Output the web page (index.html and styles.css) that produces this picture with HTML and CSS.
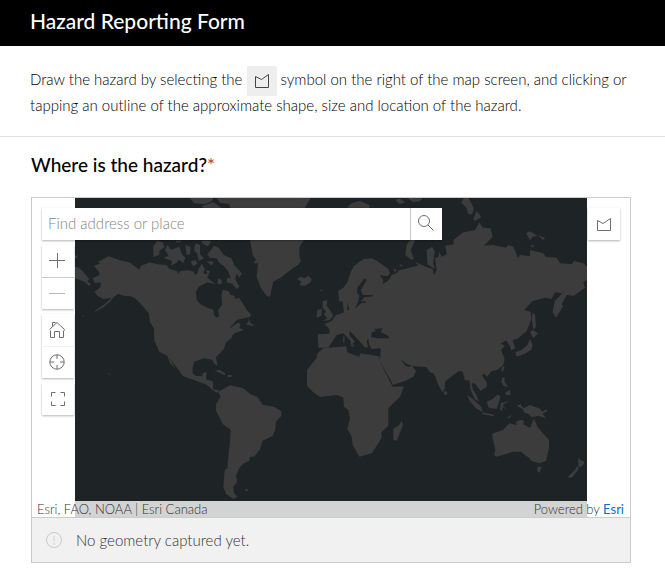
FILE: index.html
```html
<!DOCTYPE html>
<html lang="en">
<head>
<meta charset="utf-8">
<meta name="viewport" content="width=device-width, initial-scale=1">
<title>Hazard Reporting Form</title>
<link rel="stylesheet" href="styles.css">
</head>
<body>
<header class="banner"><h1>Hazard Reporting Form</h1></header>
<main>
<section class="intro">
<p>Draw the hazard by selecting the <span class="symbol"><svg width="16" height="16" viewBox="0 0 16 16"><path d="M1.500 3.500L7.500 6.500L14.500 1.500V14.500H1.500Z"/></svg></span> symbol on the right of the map screen, and clicking or tapping an outline of the approximate shape, size and location of the hazard.</p>
</section>
<section class="question">
<h2>Where is the hazard?<span class="required">*</span></h2>
<div class="card">
<div class="map">
<svg class="world" viewBox="15 9 1536 957" role="img" aria-label="World map">
<rect class="sea" x="15" y="9" width="1536" height="957"/>
<g class="land">
<path d="M72 212L90 206L84 200L116 184L150 196L178 202L208 224L213 212L240 202L262 208L290 210L298 222L322 228L324 238L330 228L355 226L372 230L374 240L382 236L385 222L396 206L404 222L400 235L412 238L408 225L420 228L412 248L436 268L412 262L386 275L378 290L380 315L392 328L412 338L430 344L432 360L440 368L448 364L444 345L456 330L454 300L458 284L475 288L482 300L494 302L496 312L506 308L518 324L530 344L543 358L540 366L520 370L500 375L476 402L505 382L512 390L508 398L522 405L496 414L488 420L484 430L468 442L462 462L438 486L442 512L434 508L426 494L400 490L386 496L372 500L368 520L368 535L378 543L396 543L400 533L410 531L408 553L428 559L430 583L450 587L440 593L425 583L410 569L372 555L338 543L328 527L295 485L318 523L300 505L292 483L268 470L253 437L252 400L240 382L236 355L222 338L210 325L198 312L182 304L160 302L145 296L132 305L118 322L100 337L70 354L82 342L108 325L124 308L100 312L82 302L74 290L92 276L92 262L74 264L68 250L88 240L88 232Z"/>
<path d="M15 180L25 186L15 190ZM15 214L32 222L48 240L58 252L52 258L62 268L58 274L44 260L15 250ZM36 362L42 360L42 365ZM110 532L122 539L121 542Z"/>
<path d="M262 138L278 142L284 156L268 168L268 180L250 186L250 155ZM285 166L292 150L304 164L328 155L336 178L346 188L340 204L326 194L318 205L302 212L306 198L280 188L296 182ZM318 137H332V142H318ZM346 150L362 156L360 178L350 180ZM376 145L390 150L390 178L402 190L386 198L382 178L372 165ZM392 137L425 137L414 154L400 148ZM362 200L376 194L382 206L370 214ZM422 166L432 152L446 158L462 180L484 190L494 212L516 235L508 248L500 236L496 252L508 275L500 282L486 266L470 262L472 248L482 250L474 228L462 214L448 204L440 190L420 188L412 178ZM410 198L432 200L424 212ZM444 250L456 256L454 268L442 266ZM536 380L534 370L545 388L552 390L548 394L528 388Z"/>
<path d="M360 9H430L424 20L404 28L372 25ZM395 34L430 22L455 39H400ZM440 9H722L705 39H480L478 28L450 23ZM540 135H702L688 156L688 176L692 200L684 210L668 220L632 248L610 260L600 305L590 303L572 278L560 245L564 205L550 205L558 195L548 180Z"/>
<path d="M681 252L692 245L704 250L715 242L725 252L722 262L704 273L688 270L694 260ZM752 284H757V288H752ZM434 527L448 524L466 535L464 541ZM472 539L484 540L490 544L474 547ZM525 881L536 884L528 890Z"/>
<path d="M450 587L480 571L520 580L540 597L562 605L578 629L612 635L634 649V663L618 680L616 703L608 723L578 737L570 763L552 785H540L538 797L518 807L506 823L498 843L502 860L490 875L492 895L503 905L490 912L468 897L460 875L464 825L472 820L480 735L482 705L458 687L438 647V627L452 605L445 593Z"/>
</g>
<g class="land" transform="translate(690 0)">
<path d="M72 388L95 378L108 360L124 355L132 352L128 320L118 318L114 288L130 278L142 262L152 232L160 215L178 200L192 192L215 190L232 198L265 222L270 236L262 244L240 240L250 256L248 266L264 258L275 240L292 234L296 226L315 222L335 216L356 212L345 200L366 210L378 215L398 222L402 240L410 225L405 190L415 186L418 170L425 185L440 178L436 152L462 148L460 135L490 112L525 105L538 82L548 98L572 100L578 125L552 152L580 150L618 158L625 150L640 155L654 188L660 180L690 184V165L730 175L738 186L770 188L780 205L815 208L822 198L850 205L861 215V255L850 262L855 278L822 302L800 300L785 328L790 332L768 368L758 352L764 318L780 302L794 285L785 295L765 292L755 312L735 308L698 318L672 345L692 350L694 372L680 408L655 430L638 436L646 460L634 466L628 450L618 436L602 446L615 452L603 465L614 490L610 510L592 525L575 528L560 546L554 536L545 540L560 562V575L542 588L526 566L515 565L518 582L528 598L538 620L524 612L512 586L508 556L495 556L488 530L478 528L460 540L435 560L434 582L428 592L415 570L405 542L400 535L390 532L378 516L342 514L322 508L302 492L316 512L328 516L334 510L348 528L340 545L315 558L278 570L272 556L240 500L242 460L215 462L208 450L204 430L200 440L205 456L195 458L180 440L150 408L148 420L165 440L152 450V438L130 415L110 420L100 435L85 458H55L53 418L88 416V402L76 390Z"/>
<path d="M70 460L138 454L142 472L178 486L180 475L238 484L242 505L278 575L312 574L300 605L265 640V692L244 712L245 728L232 750L215 775L178 785L158 750L155 725L142 702L150 670L145 645L132 635L130 608L112 600L60 606L38 590L21 572V525L50 488L52 475ZM304 677L309 690L290 737L280 736V701L298 690Z"/>
<path d="M68 318L82 315L80 332L90 345L100 362L88 376L68 378L82 370L72 358L78 350L68 338ZM52 344L66 342L64 362L50 368ZM130 423L134 425L133 445L129 442ZM150 450L164 448L158 456ZM62 284H66V288H62Z"/>
<path d="M0 9H28L15 34L0 38ZM142 38L155 24L180 18L208 30V39ZM286 14L300 11L316 22L298 27ZM322 9H368L360 19L340 22ZM483 22L492 9H505L522 40L516 58L504 56L500 40ZM520 72L530 48L544 66L524 78ZM330 135H346L332 165L342 192L334 194L315 180L320 150ZM380 165L396 155L404 168L400 205L404 222L382 208ZM280 220L290 225L284 234ZM298 207L308 210L304 216ZM678 115L690 109L712 122L698 126L690 135ZM714 120L736 130L728 135ZM692 150L704 152L698 158Z"/>
<path d="M697 352L705 360L708 395L700 404L696 378ZM690 412L698 404L714 415L700 430ZM690 432L698 450L694 464L674 476L650 485L646 472L665 464L682 450ZM603 527L607 514L614 515L609 530ZM606 550L613 546L614 562L624 575L612 574L604 562ZM616 592L630 585L632 600L618 600ZM432 588L442 590L440 600L434 600Z"/>
<path d="M500 600L516 610L544 635L548 652L528 640L512 622ZM546 652L582 659L580 664L548 657ZM560 620L578 612L594 598L602 606L590 642L566 638ZM602 624L628 618L608 630L620 646L608 636L606 650L600 642ZM620 668L636 660L628 670ZM650 632L662 628L670 640L690 630L722 642L726 650L740 643L742 648L728 656L738 670L716 662L696 667L684 656L674 654L668 642Z"/>
<path d="M576 720L580 715L608 705L628 685L650 690L648 680L662 674L672 678L670 688L690 698L702 670L712 695L726 712L747 735V760L738 798L718 805L694 798L684 785L676 782L664 770L640 770L590 785L582 780L586 765ZM712 815L725 815L718 834L712 828ZM834 788L842 796L854 800L848 812L836 818ZM832 812L836 822L816 848L802 847L824 826Z"/>
</g>
<g class="sea" transform="translate(690 0)">
<path d="M194 250L200 256L182 285L188 300L218 300V304L192 307L182 320L196 318V324L184 324L170 337L165 342L175 318L178 300L172 296V278ZM142 320L148 345L142 346ZM216 412L228 408L222 402L248 400L242 412L262 420L268 430L230 430L213 425Z"/>
</g>
</svg>
<form class="search"><input type="search" aria-label="Find address or place" placeholder="Find address or place"><button type="button" aria-label="Search"><svg width="18" height="18" viewBox="0 0 18 18"><circle cx="7" cy="7" r="5.500"/><path d="M11 11L16.500 16.500"/></svg></button></form>
<div class="tools">
<div class="group"><button type="button" aria-label="Zoom in"><svg width="16" height="16" viewBox="0 0 16 16"><path d="M0 8.500H16M8.500 1V16"/></svg></button><button type="button" class="faded" aria-label="Zoom out"><svg width="16" height="16" viewBox="0 0 16 16"><path d="M0 8.500H16"/></svg></button></div>
<div class="group plain"><button type="button" aria-label="Default view"><svg width="16" height="18" viewBox="0 -1 16 18"><path d="M1.500 9.500V16.500H5.500V10.500H10.500V16.500H14.500V9.500M.5 8.500L8 1.500L15.500 8.500V9.500M3.500 5.500V1.500H6.500"/></svg></button><button type="button" aria-label="Find my location"><svg width="16" height="16" viewBox="0 0 16 16"><circle cx="8" cy="8" r="7.200"/><path d="M8 1V5M8 11V15M1 8H5M11 8H15"/></svg></button></div>
<div class="group"><button type="button" aria-label="Enter fullscreen"><svg width="16" height="16" viewBox="-1 -1 16 16"><path d="M1.500 5.500V1.500H5.500M10.500 1.500H14.500V5.500M14.500 10.500V14.500H10.500M5.500 14.500H1.500V10.500"/></svg></button></div>
</div>
<div class="group draw"><button type="button" aria-label="Draw polygon"><svg width="16" height="16" viewBox="0 0 16 16"><path d="M1.500 4.500L7 7.500L14.500 2.500V14.500H1.500Z"/></svg></button></div>
<div class="credits"><span>Esri, FAO, NOAA | Esri Canada</span><span>Powered by <a href="#esri">Esri</a></span></div>
</div>
<div class="status"><svg width="18" height="18" viewBox="0 0 18 18"><circle cx="9" cy="9" r="7.500"/><path d="M9 5V10M9 11.500V13.500"/></svg><span>No geometry captured yet.</span></div>
</div>
</section>
</main>
</body>
</html>
```
FILE: styles.css
```css
* { box-sizing: border-box; }
body {
  margin: 0;
  background: #fff;
  color: #000;
  font: 300 15px/26px Lato, "Liberation Sans", sans-serif;
}
svg { display: block; flex: none; overflow: visible; fill: none; stroke: #6e6e6e; stroke-width: 1; }
h1, h2, p { margin: 0; }
h1 { font-size: 21px; line-height: 26px; font-weight: 500; }
h2 { font-size: 19px; line-height: 24px; font-weight: 500; }
.banner { padding: 8px 30px 12px; background: #000; color: #fff; }
.intro { padding: 20px 30px 18px; border-bottom: 1px solid #e0e0e0; }
.symbol {
  display: inline-flex;
  align-items: center;
  justify-content: center;
  width: 30px;
  height: 30px;
  margin: -4px 0;
  vertical-align: middle;
  background: #eee;
}
.symbol svg { stroke: #444; }
.question { padding: 16px 34px 11px 31px; }
.required { color: #c4382d; font-weight: 400; }
.card { margin-top: 20px; border: 1px solid #ccc; }
.map {
  position: relative;
  display: flex;
  justify-content: center;
  overflow: hidden;
  background: #fff;
}
.world { width: 512px; overflow: hidden; stroke: none; }
.land { fill: #3b3c3b; }
.sea { fill: #1e2326; }
.search {
  position: absolute;
  top: 10px;
  left: 10px;
  display: flex;
  width: 400px;
  height: 32px;
  background: #fff;
  box-shadow: 0 1px 2px rgba(0, 0, 0, .3);
}
.search input {
  flex: 1;
  min-width: 0;
  padding: 0 6px 2px;
  border: 0;
  border-right: 1px solid #ccc;
  background: #fff;
  color: #323232;
  font: inherit;
}
.search input::placeholder { color: #858585; opacity: 1; }
button {
  display: flex;
  align-items: center;
  justify-content: center;
  width: 32px;
  height: 32px;
  padding: 0;
  border: 0;
  background: #fff;
}
.search button { width: 31px; }
.search button, .tools button { padding: 0 2px 2px 0; }
.tools {
  position: absolute;
  top: 47px;
  left: 10px;
  display: grid;
  gap: 5px;
}
.group { background: #fff; box-shadow: 0 1px 2px rgba(0, 0, 0, .3); }
.group button + button { border-top: 1px solid #ccc; }
.plain button + button { border-top-color: #f2f2f2; }
.faded svg { opacity: .5; }
.draw { position: absolute; top: 10px; right: 10px; }
.credits {
  position: absolute;
  inset: auto 0 0;
  display: flex;
  justify-content: space-between;
  padding: 0 6px 0 5px;
  background: rgba(255, 255, 255, .8);
  color: #323232;
  font-size: 13px;
  line-height: 16px;
}
a { color: #0070d1; font-weight: 400; text-decoration: none; }
.status {
  display: flex;
  align-items: center;
  gap: 13px;
  padding: 9px 13px;
  border-top: 1px solid #ccc;
  background: #f1f1f1;
  color: #323232;
}
.status svg { stroke: #ccc; }
```
